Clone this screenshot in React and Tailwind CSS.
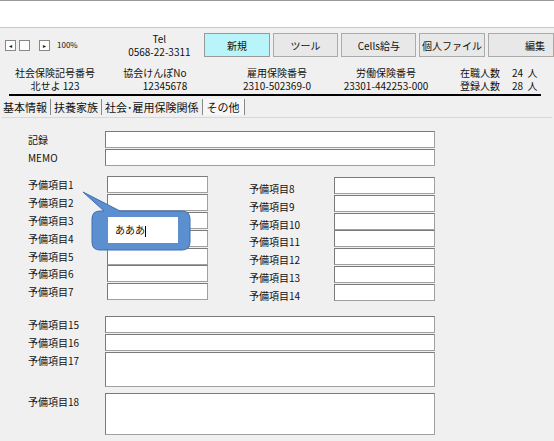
export default function App() {
  const f = { fontFamily: '"Noto Sans CJK JP","Liberation Sans",sans-serif' };
  const inp = "bg-white border border-[#a0a0a0] border-t-[#7a7a7a] border-l-[#7a7a7a] box-border";
  const left = [1,2,3,4,5,6,7];
  const right = [8,9,10,11,12,13,14];
  return (
    <div className="w-[554px] h-[441px] bg-[#f0f0f0] relative overflow-hidden text-[10px] text-[#111] whitespace-nowrap" style={f}>
      <div className="h-[28px] bg-white border-t border-t-[#999] border-b border-b-[#c8c8c8]" />
      <div className="flex items-center h-[32px] pt-[2px]">
        <div className="flex items-center ml-[5px] gap-[3px] w-[130px]">
          <span className="w-[11px] h-[11px] border border-[#888] bg-white text-[6px] leading-[9px] text-center">◂</span>
          <span className="w-[11px] h-[11px] border border-[#888] bg-white" />
          <span className="w-[11px] h-[11px] border border-[#888] bg-white ml-[6px] text-[6px] leading-[9px] text-center">▸</span>
          <span className="text-[8px] ml-[4px]">100%</span>
        </div>
        <div className="w-[70px] text-center leading-[13px] text-[10px]">Tel<br/>0568-22-3311</div>
        <button className="ml-[12px] w-[70px] h-[24px] bg-[#b8f4fa] border border-[#999] text-[10px]">新規</button>
        <button className="ml-[3px] w-[70px] h-[24px] bg-[#e8e8e8] border border-[#aaa] text-[10px]">ツール</button>
        <button className="ml-[3px] w-[80px] h-[24px] bg-[#e8e8e8] border border-[#aaa] text-[10px]">Cells給与</button>
        <button className="ml-[3px] w-[70px] h-[24px] bg-[#e8e8e8] border border-[#aaa] text-[10px]">個人ファイル</button>
        <button className="ml-[3px] w-[70px] h-[24px] bg-[#e8e8e8] border border-[#aaa] text-[10px] text-right pr-[8px]">編集</button>
      </div>
      <div className="flex h-[34px] leading-[13px] text-[10px] pt-[6px]">
        <div className="w-[110px] text-center">社会保険記号番号<br/>北せよ 123</div>
        <div className="w-[82px] text-center ml-[4px]">協会けんぽNo<br/><span className="pl-[20px]">12345678</span></div>
        <div className="w-[106px] text-center ml-[28px]">雇用保険番号<br/>2310-502369-0</div>
        <div className="w-[96px] text-center ml-[8px]">労働保険番号<br/>23301-442253-000</div>
        <div className="ml-[26px]">在職人数<br/>登録人数</div>
        <div className="ml-[12px]">24 &nbsp;人<br/>28 &nbsp;人</div>
      </div>
      <div className="ml-[9px] w-[532px] h-[2px] bg-black" />
      <div className="flex h-[20px] items-center mt-[1px] text-[11px]">
        <span className="px-[3px] border-r border-[#888]">基本情報</span>
        <span className="px-[3px] border-r border-[#888]">扶養家族</span>
        <span className="px-[3px] border-r border-[#888]">社会･雇用保険関係</span>
        <span className="px-[4px] border-r border-[#888] bg-[#f7f7f7]">その他</span>
      </div>
      <div className="border-t border-[#d8d8d8] mx-[2px] h-[320px] pl-[26px] pt-[12px]">
        <div className="flex items-center h-[18px]"><span className="w-[77px]">記録</span><div className={`w-[330px] h-[17px] ${inp}`} /></div>
        <div className="flex items-center h-[18px]"><span className="w-[77px]">MEMO</span><div className={`w-[330px] h-[17px] ${inp}`} /></div>
        <div className="flex mt-[10px]">
          <div>
            {left.map(n => (
              <div key={n} className="flex items-center h-[17.8px]"><span className="w-[79px]">予備項目{n}</span><div className={`w-[101px] h-[17px] ${inp}`} /></div>
            ))}
          </div>
          <div className="ml-[41px]">
            {right.map(n => (
              <div key={n} className="flex items-center h-[17.8px] pt-[1px]"><span className="w-[85px] mt-[6px]">予備項目{n}</span><div className={`w-[101px] h-[17px] ${inp}`} /></div>
            ))}
          </div>
        </div>
        <div className="mt-[15px]">
          <div className="flex items-center h-[18px]"><span className="w-[77px]">予備項目15</span><div className={`w-[330px] h-[17px] ${inp}`} /></div>
          <div className="flex items-center h-[18px]"><span className="w-[77px]">予備項目16</span><div className={`w-[330px] h-[17px] ${inp}`} /></div>
          <div className="flex items-start h-[41px]"><span className="w-[77px] mt-[1px]">予備項目17</span><div className={`w-[330px] h-[35px] ${inp}`} /></div>
          <div className="flex items-start"><span className="w-[77px] mt-[1px]">予備項目18</span><div className={`w-[330px] h-[42px] ${inp}`} /></div>
        </div>
      </div>
      <svg className="absolute left-[82px] top-[190px]" width="110" height="62">
        <path d="M1 2 L38 21 L100 21 Q108 21 108 29 L108 52 Q108 60 100 60 L18 60 Q10 60 10 52 L10 29 Q10 21 18 21 L22 21 Z" fill="#5b8fd0" stroke="#3f6fb0" strokeWidth="1"/>
      </svg>
      <div className="absolute left-[108px] top-[217px] w-[70px] h-[26px] bg-white text-[10px] leading-[26px] pl-[7px]">あああ<span className="inline-block w-[1px] h-[11px] bg-black align-middle" /></div>
    </div>
  );
}
